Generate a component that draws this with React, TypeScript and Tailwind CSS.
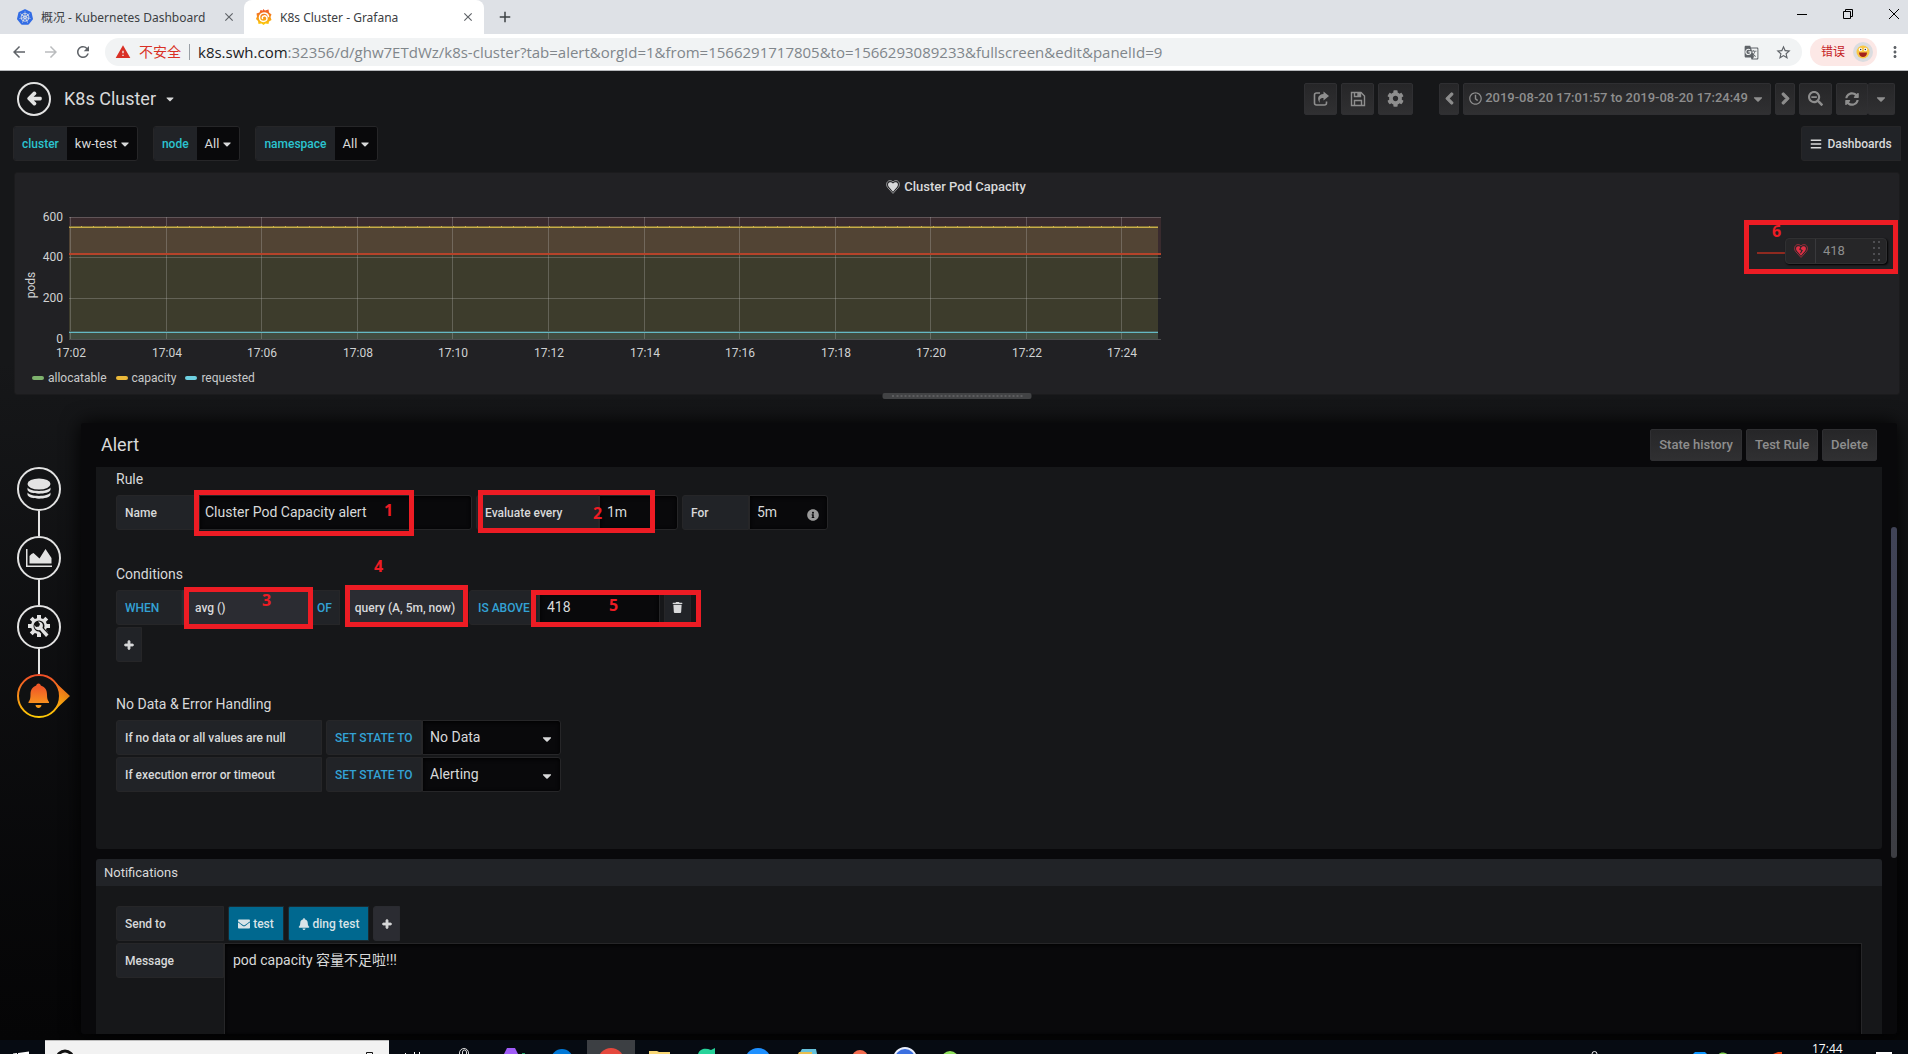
import React from "react";
import {
  FaArrowLeft,
  FaBars,
  FaBell,
  FaCaretDown,
  FaChevronLeft,
  FaChevronRight,
  FaCog,
  FaEnvelope,
  FaInfoCircle,
  FaPlus,
  FaRegClock,
  FaSearchMinus,
  FaSyncAlt,
  FaTrash,
} from "react-icons/fa";
import {
  MdArrowBack,
  MdArrowForward,
  MdClose,
  MdGTranslate,
  MdMoreVert,
  MdRefresh,
  MdStarBorder,
  MdWarning,
  MdAdd,
} from "react-icons/md";
import { SiKubernetes } from "react-icons/si";

const chromeFont = "font-['Noto_Sans','Noto_Sans_CJK_SC',sans-serif]";

function GrafanaLogo() {
  return (
    <svg viewBox="0 0 32 32" className="h-4 w-4 shrink-0" aria-hidden="true">
      <defs>
        <linearGradient id="grafana" x1="0" y1="0" x2="0" y2="1">
          <stop offset="0" stopColor="#f0522a" />
          <stop offset="1" stopColor="#fdd00a" />
        </linearGradient>
      </defs>
      <path
        fill="url(#grafana)"
        d="M14 0l4 3 7-2 1 6 5 4-2 5 2 6-5 3-1 5-6-1-4 3-4-3-6 1-1-6-4-4 2-5-1-6 6-2 2-5 5 1z"
      />
      <path
        fill="none"
        stroke="#fff"
        strokeWidth="3"
        strokeLinecap="round"
        d="M25 15c-1-5-5-7-9-7-5 0-9 4-9 9 0 4 3 8 8 8 4 0 7-3 7-6 0-4-3-6-6-5-3 0-4 3-3 5"
      />
    </svg>
  );
}

function BrowserTabs() {
  return (
    <div className={`flex h-[34px] shrink-0 items-stretch bg-[#dee1e6] text-xs text-[#3c4043] ${chromeFont}`}>
      <div className="flex w-[244px] items-center gap-2 pl-[17px] pr-2">
        <SiKubernetes className="h-4 w-4 shrink-0 text-[#326ce5]" />
        <span className="flex-1 pt-[2px] whitespace-nowrap">概况 - Kubernetes Dashboard</span>
        <button aria-label="Close tab" className="text-[#5f6368]">
          <MdClose className="h-[14px] w-[14px]" />
        </button>
      </div>
      <div className="flex w-[240px] items-center gap-2 rounded-t-lg bg-white pl-3 pr-[9px]">
        <GrafanaLogo />
        <span className="flex-1 truncate pt-[2px]">K8s Cluster - Grafana</span>
        <button aria-label="Close tab" className="text-[#5f6368]">
          <MdClose className="h-[14px] w-[14px]" />
        </button>
      </div>
      <button aria-label="New tab" className="ml-3 text-[#3c4043]">
        <MdAdd className="h-[18px] w-[18px]" />
      </button>
      <div className="ml-auto flex items-start pt-2 text-black">
        <button aria-label="Minimize" className="flex h-3 w-[46px] items-center justify-center">
          <svg className="h-3 w-3" viewBox="0 0 12 12" fill="none" stroke="currentColor">
            <path d="M1 6.500h10" />
          </svg>
        </button>
        <button aria-label="Restore" className="flex h-3 w-[46px] items-center justify-center">
          <svg className="h-3 w-3" viewBox="0 0 12 12" fill="none" stroke="currentColor">
            <path d="M1.500 3.500h7v7h-7zM3.500 3.500v-2h7v7h-2" />
          </svg>
        </button>
        <button aria-label="Close window" className="flex h-3 w-[37px] items-center justify-end pr-2">
          <svg className="h-3 w-3" viewBox="0 0 12 12" fill="none" stroke="currentColor">
            <path d="M1 1l10 10M11 1L1 11" />
          </svg>
        </button>
      </div>
    </div>
  );
}

function AddressBar() {
  return (
    <div className={`flex h-[37px] shrink-0 items-center border-b border-[#b6b8bb] bg-white pr-1 ${chromeFont}`}>
      <div className="flex w-[105px] items-center gap-[14px] pl-[10px] text-[#5f6368]">
        <button aria-label="Back"><MdArrowBack className="h-[18px] w-[18px]" /></button>
        <button aria-label="Forward" className="text-[#babcbe]"><MdArrowForward className="h-[18px] w-[18px]" /></button>
        <button aria-label="Reload"><MdRefresh className="h-[18px] w-[18px]" /></button>
      </div>
      <div className="flex h-7 flex-1 items-center rounded-full bg-[#f1f3f4] pl-[10px] pr-[10px] text-[15px]">
        <MdWarning className="mr-2 h-4 w-4 text-[#d93025]" />
        <span className="text-sm text-[#d93025]">不安全</span>
        <span className="mx-2 h-4 w-px bg-[#9aa0a6]" />
        <span className="font-['Open_Sans',sans-serif] whitespace-nowrap text-[#80868b]">
          <span className="text-[#202124]">k8s.swh.com</span>
          :32356/d/ghw7ETdWz/k8s-cluster?tab=alert&amp;orgId=1&amp;from=1566291717805&amp;to=1566293089233&amp;fullscreen&amp;edit&amp;panelId=9
        </span>
        <button aria-label="Translate" className="ml-auto text-[#5f6368]"><MdGTranslate className="h-[15px] w-[15px]" /></button>
        <button aria-label="Bookmark" className="ml-4 text-[#5f6368]"><MdStarBorder className="h-[17px] w-[17px]" /></button>
      </div>
      <button className="ml-2 flex h-7 w-[67px] items-center justify-between rounded-full bg-[#fce8e6] pl-[11px] pr-1 text-xs text-[#c5221f]">
        错误
        <span className="flex h-5 w-5 items-center justify-center rounded-full bg-[#dadce0]">
          <svg viewBox="0 0 14 14" className="h-[14px] w-[14px]" aria-hidden="true">
            <circle cx="7" cy="7" r="6.500" fill="#f9c846" />
            <circle cx="4.500" cy="4.500" r="1.700" fill="#fff" />
            <circle cx="9.500" cy="4.500" r="1.700" fill="#fff" />
            <circle cx="4.700" cy="4.500" r="0.700" fill="#222" />
            <circle cx="9.300" cy="4.500" r="0.700" fill="#222" />
            <path d="M3 7.500h8c0 3-2 4.500-4 4.500s-4-1.500-4-4.500z" fill="#a3201c" />
          </svg>
        </span>
      </button>
      <button aria-label="Menu" className="ml-[9px] text-[#5f6368]"><MdMoreVert className="h-[18px] w-[18px]" /></button>
    </div>
  );
}

const navBtn =
  "flex h-8 items-center justify-center rounded-[2px] border border-[#2f2f32] bg-linear-to-b from-[#262628] to-[#303032] text-[#8e8e8e]";
const heavy = "stroke-current [stroke-width:48]";

function DashboardHeader() {
  return (
    <header className="flex h-[55px] items-center pl-[17px] pr-[13px]">
      <button aria-label="Back to dashboard" className="flex h-[34px] w-[34px] items-center justify-center rounded-full border-2 border-[#e3e3e3] text-[#e3e3e3]">
        <FaArrowLeft className={`h-[15px] w-[15px] ${heavy}`} />
      </button>
      <button className="ml-[13px] flex items-center gap-2 text-lg text-[#d8d9da]">
        K8s Cluster
        <FaCaretDown className="h-3 w-3" />
      </button>
      <div className="ml-auto flex gap-1 text-sm font-medium">
        <button aria-label="Share" className={`${navBtn} w-[33px]`}>
          <svg viewBox="0 0 16 16" className="h-4 w-4" aria-hidden="true">
            <path d="M7 2H3.500Q1.500 2 1.500 4v8q0 2 2 2h8q2 0 2-2v-1.500" fill="none" stroke="currentColor" strokeWidth="1.600" />
            <path d="M10.500 0.500L16 5l-5.500 4.500V7C7 7 6 8.500 7 12 3.500 8 5 3.200 10.500 3z" fill="currentColor" />
          </svg>
        </button>
        <button aria-label="Save" className={`${navBtn} w-[33px]`}>
          <svg viewBox="0 0 16 16" className="h-4 w-4" fill="none" stroke="currentColor" strokeWidth="1.400" aria-hidden="true">
            <path d="M1.500 1.500h9.500l3.500 3.500v9.500h-13z" />
            <path d="M4.500 14.500V9.500h7v5M4.500 1.500v4h6v-4" />
            <path d="M8 2.500h1.500v2H8z" />
          </svg>
        </button>
        <button aria-label="Settings" className={`${navBtn} mr-[22px] w-[35px]`}><FaCog className="h-[17px] w-[17px]" /></button>
        <button aria-label="Earlier" className={`${navBtn} w-5`}><FaChevronLeft className={`h-[13px] w-[13px] ${heavy}`} /></button>
        <button className={`${navBtn} w-[308px] gap-[3px]`}>
          <FaRegClock className="h-[13px] w-[13px]" />
          <span className="text-[13px]">2019-08-20 17:01:57 to 2019-08-20 17:24:49</span>
          <FaCaretDown className="h-[14px] w-[14px]" />
        </button>
        <button aria-label="Later" className={`${navBtn} w-5`}><FaChevronRight className={`h-[13px] w-[13px] ${heavy}`} /></button>
        <button aria-label="Zoom out" className={`${navBtn} w-[33px]`}><FaSearchMinus className="h-[15px] w-[15px]" /></button>
        <div className="flex">
          <button aria-label="Refresh" className={`${navBtn} w-8`}><FaSyncAlt className="h-[14px] w-[14px]" /></button>
          <button aria-label="Refresh interval" className={`${navBtn} w-[27px] border-l-0`}><FaCaretDown className="h-[14px] w-[14px]" /></button>
        </div>
      </div>
    </header>
  );
}

function Variable({ name, value }: { name: string; value: string }) {
  return (
    <div className="flex h-[35px] overflow-hidden rounded-[3px] border border-[#262628] text-[13px]">
      <span className="flex items-center bg-[#212327] px-2 text-xs font-medium text-[#2bc4d0]">{name}</span>
      <button className="flex items-center gap-1 bg-[#09090b] px-2 text-[#d8d9da]">
        {value}
        <FaCaretDown className="h-[14px] w-2" />
      </button>
    </div>
  );
}

const ticks = [
  { x: 70, t: "17:02" }, { x: 166, t: "17:04" }, { x: 261, t: "17:06" }, { x: 357, t: "17:08" },
  { x: 452, t: "17:10" }, { x: 548, t: "17:12" }, { x: 644, t: "17:14" }, { x: 739, t: "17:16" },
  { x: 835, t: "17:18" }, { x: 930, t: "17:20" }, { x: 1026, t: "17:22" }, { x: 1121, t: "17:24" },
];
const rows = [
  { y: 6, t: "600" }, { y: 46, t: "400" }, { y: 87, t: "200" }, { y: 128, t: "0" },
];

function Chart() {
  return (
    <svg viewBox="15 0 1160 152" className="block h-[152px] w-[1160px] font-[Roboto,sans-serif] text-xs" role="img" aria-label="Cluster pod capacity over time">
      <rect x="69" y="6" width="1092" height="37" fill="#e97671" fillOpacity="0.130" />
      <rect x="69" y="16" width="1089" height="112" fill="#bab44e" fillOpacity="0.190" />
      <rect x="69" y="121" width="1089" height="7" fill="#6ed0e0" fillOpacity="0.110" />
      <g stroke="#d0d0d0" strokeOpacity="0.260">
        {ticks.map((k) => <path key={k.t} d={`M${k.x + 0.5} 6v122`} />)}
        {rows.map((k) => <path key={k.t} d={`M69 ${k.y + 0.5}h1092`} />)}
      </g>
      <path d="M69 15.500h1089" stroke="#7d6f38" />
      <path d="M81 15.500h1077" stroke="#c9ac47" strokeDasharray="1 11" />
      <path d="M69 16.500h1089" stroke="#c9ac47" />
      <path d="M69 43h1092" stroke="#b5432a" strokeWidth="2" />
      <path d="M69 120.500h1089" stroke="#4a5f5a" />
      <path d="M69 121.500h1089" stroke="#64b9c4" />
      <g fill="#d0d1d2" textAnchor="middle">
        {ticks.map((k) => <text key={k.t} x={k.x + 1} y="146">{k.t}</text>)}
      </g>
      <g fill="#d0d1d2" textAnchor="end">
        {rows.map((k) => <text key={k.t} x="63" y={k.y + 4}>{k.t}</text>)}
      </g>
      <text transform="rotate(-90 35 74)" x="35" y="74" textAnchor="middle" fill="#d0d1d2">pods</text>
    </svg>
  );
}

function HeartIcon({ broken = false, className = "" }: { broken?: boolean; className?: string }) {
  return (
    <svg viewBox="0 0 24 24" className={className} aria-hidden="true">
      <path fill="none" stroke="currentColor" strokeWidth="1.500" opacity="0.700" d="M12 23L2.500 12.500C-1 7 2 1 7 1c2.500 0 4 1 5 2.500C13 2 14.500 1 17 1c5 0 8 6 4.500 11.500z" />
      <path fill="currentColor" d="M12 20L5 12C2 8 4 4 7.500 4c2 0 3.500 1 4.500 2.500C13 5 14.500 4 16.500 4 20 4 22 8 19 12z" />
      {broken && <path fill="none" stroke="#262628" strokeWidth="1.800" d="M12 5l-2 4 4 2-3 5" />}
    </svg>
  );
}

function Mark({ n, box, num }: { n: string; box: string; num: string }) {
  return (
    <div aria-hidden="true" className={`pointer-events-none absolute z-10 border-5 border-[#ed1c24] ${box}`}>
      <span className={`absolute font-['Open_Sans',sans-serif] text-base leading-4 font-bold text-[#ed1c24] ${num}`}>{n}</span>
    </div>
  );
}

const legend = [
  { t: "allocatable", c: "bg-[#7eb26d]" },
  { t: "capacity", c: "bg-[#eab839]" },
  { t: "requested", c: "bg-[#6ed0e0]" },
];

function GraphPanel() {
  return (
    <section className="relative ml-[14px] mr-2 h-[223px] shrink-0 rounded-[3px] border border-[#1b1b1d] bg-[#212124]">
      <h2 className="flex h-[38px] items-center justify-center gap-1 pr-[2px] pb-[10px] text-[13px] font-medium text-[#d8d9da]">
        <HeartIcon className="h-[14px] w-[14px]" />
        Cluster Pod Capacity
      </h2>
      <Chart />
      <ul className="flex gap-[9px] pl-[17px] pt-[7px] text-xs text-[#c8c9ca]">
        {legend.map((l) => (
          <li key={l.t} className="flex items-center gap-1">
            <span className={`h-1 w-3 rounded-[2px] ${l.c}`} />
            {l.t}
          </li>
        ))}
      </ul>
      <div className="absolute top-[65px] right-3 flex items-center">
        <span className="mt-[3px] h-[2px] w-7 bg-[#8f2a20]" />
        <div className="flex h-[26px] items-stretch rounded-[4px] border border-[#303032] bg-[#262628] shadow-[1px_1px_2px_#000]">
          <span className="flex w-[30px] items-center justify-center border-r border-[#39393c] text-[#e02f44]">
            <HeartIcon broken className="h-[14px] w-[14px]" />
          </span>
          <span className="flex w-[70px] items-center justify-between pl-[7px] pr-[6px] text-[13px] text-[#8e8e8e]">
            418
            <span className="grid grid-cols-2 gap-x-[3px] gap-y-1">
              {[0, 1, 2, 3, 4, 5, 6, 7].map((i) => (
                <span key={i} className="h-[2px] w-[2px] bg-[#4e4e52]" />
              ))}
            </span>
          </span>
        </div>
      </div>
      <Mark n="6" box="top-[47px] right-[1px] h-[54px] w-[154px]" num="left-[23px] -top-[2px]" />
      <div className="absolute -bottom-[5px] left-1/2 flex h-[6px] w-[149px] -translate-x-1/2 items-center justify-center rounded-[2px] bg-[#424345]">
        <span className="w-[131px] border-t-2 border-dotted border-[#5c5d5f]" />
      </div>
    </section>
  );
}

function StepIcon({ label, children }: { label: string; children: React.ReactNode }) {
  return (
    <button aria-label={label} className="flex h-11 w-11 items-center justify-center rounded-full border-2 border-[#e3e3e3] text-[#e3e3e3]">
      {children}
    </button>
  );
}

function SideNav() {
  return (
    <nav className="flex w-[81px] shrink-0 flex-col items-start pl-[17px] pt-11">
      <StepIcon label="Queries">
        <svg viewBox="0 0 24 24" className="h-6 w-6" fill="currentColor">
          <ellipse cx="12" cy="7" rx="11.500" ry="5.500" />
          <path d="M.5 10.500C3 15 21 15 23.500 10.500v2.300C22 18 2 18 .5 12.800z" />
          <path d="M.5 15.500C3 20 21 20 23.500 15.500v2.300C22 23 2 23 .5 17.800z" />
        </svg>
      </StepIcon>
      <span className="ml-[21px] h-[25px] w-[2px] bg-[#e3e3e3]" />
      <StepIcon label="Visualization">
        <svg viewBox="0 0 28 20" className="h-5 w-7" fill="currentColor">
          <path d="M1 1h1.500v16.500H27V19H1z" />
          <path d="M4.500 15.500V8l2-2 2-1 6 5.500 6-9.500 6 9v5.500z" />
        </svg>
      </StepIcon>
      <span className="ml-[21px] h-[25px] w-[2px] bg-[#e3e3e3]" />
      <StepIcon label="General">
        <svg viewBox="0 0 24 24" className="h-6 w-6">
          <g stroke="#e3e3e3" strokeWidth="4">
            <path d="M12 0v22M1 11h22M4.200 3.200l15.600 15.600M19.800 3.200L4.200 18.800" />
          </g>
          <circle cx="12" cy="11" r="8" fill="#e3e3e3" />
          <circle cx="12" cy="11" r="5.500" fill="#111" />
          <path d="M13 13l8 9" stroke="#111" strokeWidth="6" />
          <path d="M11 6.500l2 2.500-1 2.500-3 .5-1.500-2a4.300 4.300 0 0 0 5.500 5l6 7 2.500-2.500-6-6.500c1.500-4-1-6.500-4.500-6.500z" fill="#e3e3e3" />
        </svg>
      </StepIcon>
      <span className="ml-[21px] h-[25px] w-[2px] bg-[#e3e3e3]" />
      <button aria-label="Alert">
        <svg viewBox="0 0 53 44" className="h-11 w-[53px]">
          <defs>
            <linearGradient id="ring" x1="0" y1="0" x2="0" y2="44" gradientUnits="userSpaceOnUse">
              <stop offset="0" stopColor="#ef4b28" />
              <stop offset="1" stopColor="#ffcf05" />
            </linearGradient>
            <linearGradient id="bell" x1="0" y1="8" x2="0" y2="36" gradientUnits="userSpaceOnUse">
              <stop offset="0.200" stopColor="#f05a28" />
              <stop offset="1" stopColor="#fba919" />
            </linearGradient>
          </defs>
          <path d="M38 8l15 14-15 14c5-9 5-19 0-28z" fill="url(#ring)" />
          <circle cx="22" cy="22" r="21" fill="#101112" stroke="url(#ring)" strokeWidth="2" />
          <path d="M21.500 9.500c1.500 0 2 1 2.300 2 4.700 1.500 6.200 5 6.200 9 0 4 .5 5.500 2 7.500v1H11.500v-1c1.500-2 2-3.500 2-7.500 0-4 1.500-7.500 5.700-9 .3-1 .8-2 2.300-2zM18.500 31h6c-.3 4-5.700 4-6 0z" fill="url(#bell)" />
        </svg>
      </button>
    </nav>
  );
}

const label = "flex h-[35px] items-center border border-[#262628] bg-[#212327] px-2 text-xs font-medium text-[#d8d9da]";
const blue = "flex h-[35px] items-center border border-[#262628] bg-[#212327] text-xs font-medium text-[#33a2d5]";
const field = "h-[35px] border border-[#262628] bg-[#09090b] pb-[2px] text-sm text-[#d8d9da] outline-none shadow-[inset_0_1px_4px_#000]";
const segment = "flex h-[35px] items-center border border-[#2a2b30] bg-[#2b2c32] text-xs font-medium whitespace-nowrap text-[#d8d9da]";
const iconBtn = "flex h-[35px] items-center justify-center border border-[#262628] bg-[#212327] text-[#d8d9da]";
const heading = "text-sm leading-5 text-[#d8d9da]";

function StateRow({ id, text, value }: { id: string; text: string; value: string }) {
  return (
    <div className="flex">
      <label htmlFor={id} className={`${label} mr-1 w-[206px] rounded-l-[3px]`}>{text}</label>
      <span className={`${blue} w-24 rounded-l-[3px] px-2`}>SET STATE TO</span>
      <div className="relative">
        <select id={id} defaultValue={value} className={`${field} w-[139px] appearance-none px-[7px] rounded-r-[3px]`}>
          <option>{value}</option>
        </select>
        <FaCaretDown className="pointer-events-none absolute top-3 right-2 h-[14px] w-3 text-[#d8d9da]" />
      </div>
    </div>
  );
}

function AlertEditor() {
  return (
    <section className="mr-[11px] flex min-h-0 flex-1 flex-col rounded-[3px] bg-[#09090b] shadow-[0_0_20px_#000]">
      <div className="flex h-11 shrink-0 items-center pl-5 pr-5">
        <h1 className="text-lg text-[#d8d9da]">Alert</h1>
        <div className="ml-auto flex gap-1 text-[13px] font-medium">
          <button className={`${navBtn} w-[92px]`}>State history</button>
          <button className={`${navBtn} w-[72px]`}>Test Rule</button>
          <button className={`${navBtn} w-[55px]`}>Delete</button>
        </div>
      </div>
      <div className="flex min-h-0 flex-1 overflow-hidden pl-[15px]">
        <div className="flex min-w-0 flex-1 flex-col">
          <div className="h-[382px] shrink-0 rounded-b-[3px] bg-[#161719] px-5 pt-[2px]">
            <h2 className={heading}>Rule</h2>
            <div className="relative mt-[6px] flex">
              <label htmlFor="name" className={`${label} w-[83px] rounded-l-[3px]`}>Name</label>
              <input id="name" defaultValue="Cluster Pod Capacity alert" className={`${field} mr-1 px-[5px] w-[273px] rounded-r-[3px]`} />
              <label htmlFor="every" className={`${label} w-[123px] rounded-l-[3px]`}>Evaluate every</label>
              <input id="every" defaultValue="1m" className={`${field} mr-1 px-[7px] w-[79px] rounded-r-[3px]`} />
              <label htmlFor="for" className={`${label} w-[67px] rounded-l-[3px]`}>For</label>
              <div className="relative">
                <input id="for" defaultValue="5m" className={`${field} px-[7px] w-[79px] rounded-r-[3px]`} />
                <FaInfoCircle className="absolute top-[14px] right-[9px] h-3 w-3 text-[#9a9a9a]" />
              </div>
              <Mark n="1" box="-top-[5px] left-[78px] h-[46px] w-[220px]" num="left-[185px] top-[7px]" />
              <Mark n="2" box="-top-[5px] left-[362px] h-[43px] w-[177px]" num="left-[110px] top-[10px]" />
            </div>
            <h2 className={`${heading} mt-[34px]`}>Conditions</h2>
            <div className="relative mt-[6px] flex">
              <span className={`${blue} w-[66px] rounded-l-[3px] px-2`}>WHEN</span>
              <button className={`${segment} w-[130px] pl-3`}>avg ()</button>
              <span className={`${blue} mr-[5px] w-7 px-1`}>OF</span>
              <button className={`${segment} w-[120px] justify-center rounded-l-[3px]`}>query (A, 5m, now)</button>
              <span className={`${blue} ml-1 w-[70px] rounded-l-[3px] pl-2 whitespace-nowrap`}>IS ABOVE</span>
              <input aria-label="Threshold" defaultValue="418" className={`${field} mr-1 px-[7px] w-[121px]`} />
              <button aria-label="Delete condition" className={`${iconBtn} w-[27px]`}><FaTrash className="h-[11px] w-[11px]" /></button>
              <Mark n="3" box="-top-[3px] left-[68px] h-[42px] w-[129px]" num="left-[73px] top-0" />
              <Mark n="4" box="-top-[5px] left-[229px] h-[42px] w-[123px]" num="left-[24px] -top-[32px]" />
              <Mark n="5" box="top-0 left-[415px] h-[37px] w-[170px]" num="left-[73px] top-[2px]" />
            </div>
            <button aria-label="Add condition" className={`${iconBtn} mt-[2px] w-[26px] rounded-l-[3px]`}><FaPlus className={`h-[10px] w-[10px] ${heavy}`} /></button>
            <h2 className={`${heading} mt-8 mb-[6px]`}>No Data &amp; Error Handling</h2>
            <div className="flex flex-col gap-[2px]">
              <StateRow id="nodata" text="If no data or all values are null" value="No Data" />
              <StateRow id="error" text="If execution error or timeout" value="Alerting" />
            </div>
          </div>
          <h2 className="mt-[10px] flex h-[27px] shrink-0 items-center rounded-t-[3px] bg-[#212327] pl-2 text-[13px] text-[#d8d9da]">Notifications</h2>
          <div className="flex min-h-0 flex-1 flex-col gap-[2px] overflow-hidden bg-[#161719] px-5 pt-5">
            <div className="flex shrink-0">
              <span className={`${label} mr-1 w-[108px] rounded-l-[3px]`}>Send to</span>
              <button className="mr-1 flex h-[35px] w-14 items-center justify-center gap-[3px] rounded-l-[2px] border border-[#1b2a31] bg-[#00688f] text-xs font-medium text-[#d8e3e8]">
                <FaEnvelope className="h-3 w-3" />test
              </button>
              <button className="mr-1 flex h-[35px] w-[81px] items-center justify-center gap-[3px] rounded-l-[2px] border border-[#1b2a31] bg-[#00688f] text-xs font-medium text-[#d8e3e8]">
                <FaBell className="h-3 w-3" />ding test
              </button>
              <button aria-label="Add notification" className={`${segment} w-[27px] justify-center rounded-l-[3px]`}><FaPlus className={`h-[10px] w-[10px] ${heavy}`} /></button>
            </div>
            <div className="flex min-h-0 flex-1">
              <label htmlFor="message" className={`${label} w-[108px] rounded-l-[3px]`}>Message</label>
              <textarea
                id="message"
                defaultValue="pod capacity 容量不足啦!!!"
                className="block min-w-0 flex-1 resize-none border border-b-0 border-[#262628] bg-[#09090b] px-2 pt-[6px] text-sm text-[#d8d9da] outline-none shadow-[inset_0_1px_4px_#000]"
              />
            </div>
          </div>
        </div>
        <div className="w-[15px] shrink-0 pl-[9px] pt-[60px]">
          <div className="h-[331px] w-[6px] rounded-full bg-linear-to-b from-[#404357] to-[#3c3d42]" />
        </div>
      </div>
    </section>
  );
}

function Taskbar() {
  return (
    <footer className="flex h-[14px] shrink-0 items-start overflow-hidden bg-[#060b12]">
      <svg className="h-[14px] w-[45px] shrink-0" viewBox="0 0 45 14" aria-hidden="true">
        <path d="M13 13.500l4-.5v1h-4zM18 13l11-1.500V14H18z" fill="#fff" />
      </svg>
      <div className="h-[14px] w-[344px] shrink-0 border-t border-[#bdbdbd] bg-[#f2f2f2]">
        <svg className="h-[13px] w-[344px]" viewBox="0 0 344 13" fill="none" stroke="#111" aria-hidden="true">
          <circle cx="20" cy="18" r="8" strokeWidth="3" />
          <path d="M321.500 13v-1.500h6V13" />
        </svg>
      </div>
      <svg className="h-[14px] w-[571px] shrink-0" viewBox="389 0 571 14" aria-hidden="true">
        <path d="M405.500 13v1M414.500 12v2M419.500 12v2" stroke="#fff" />
        <path d="M459.500 14v-1a4.500 4.500 0 0 1 9 0v1M462.500 14v-2a2 2 0 0 1 4 0v2" fill="none" stroke="#ddd" strokeWidth="1" />
        <path d="M507 8h8l3 6h-14z" fill="#a05cf7" />
        <path d="M522 13h3v1h-3z" fill="#21a366" />
        <circle cx="562" cy="20" r="11" fill="#0078d7" />
        <path d="M587 0h48v14h-48z" fill="#3c3f43" />
        <circle cx="611" cy="21" r="13" fill="#e5483d" />
        <path d="M649 11h8l2 1h11v2h-21z" fill="#f8d775" />
        <path d="M698 14c2-6 8-6 13-4l4-2v6z" fill="#27d39a" />
        <circle cx="758" cy="21" r="13" fill="#1e90ff" />
        <path d="M802 9h14l1 5h-18z" fill="#67c2dc" />
        <path d="M799 12h13v2h-14z" fill="#e8bd4e" />
        <circle cx="860" cy="18" r="8" fill="#f26b4e" />
        <circle cx="905" cy="19" r="11" fill="#3b6fe0" stroke="#e8eefc" strokeWidth="2" />
        <circle cx="950" cy="20" r="9" fill="#8ee05a" />
      </svg>
      <svg className="ml-auto h-[14px] w-[200px] shrink-0" viewBox="0 0 200 14" aria-hidden="true">
        <path d="M4 14a2.500 2.500 0 0 1 5 0" fill="none" stroke="#eee" />
        <path d="M107 12h10l2 2h-14z" fill="#0a95ff" />
        <path d="M131 14c1-2 6-2 8 0z" fill="#7fcf50" />
        <path d="M185 14l5-2h4v2z" fill="#f0420c" />
      </svg>
      <span className="ml-[24px] mr-8 w-8 shrink-0 pt-1 font-['Open_Sans',sans-serif] text-xs leading-[10px] text-white">17:44</span>
      <span className="mr-4 mt-3 h-[2px] w-4 shrink-0 bg-white" />
    </footer>
  );
}

export default function App() {
  return (
    <div className="flex h-screen flex-col overflow-hidden bg-black font-[Roboto,'Noto_Sans_CJK_SC',sans-serif]">
      <BrowserTabs />
      <AddressBar />
      <main className="flex min-h-0 flex-1 flex-col bg-linear-to-b from-[#161719] from-30% to-[#050506] pb-[6px]">
        <DashboardHeader />
        <div className="flex h-[46px] shrink-0 items-start pl-[13px] pr-[7px]">
          <div className="flex gap-[15px]">
            <Variable name="cluster" value="kw-test" />
            <Variable name="node" value="All" />
            <Variable name="namespace" value="All" />
          </div>
          <button className="ml-auto flex h-[35px] w-[100px] items-center justify-center gap-[5px] rounded-l-[3px] border border-[#262628] bg-[#212327] text-xs font-medium text-[#d8d9da]">
            <FaBars className="h-3 w-3" />
            Dashboards
          </button>
        </div>
        <GraphPanel />
        <div className="flex min-h-0 flex-1 pt-7">
          <SideNav />
          <AlertEditor />
        </div>
      </main>
      <Taskbar />
    </div>
  );
}
